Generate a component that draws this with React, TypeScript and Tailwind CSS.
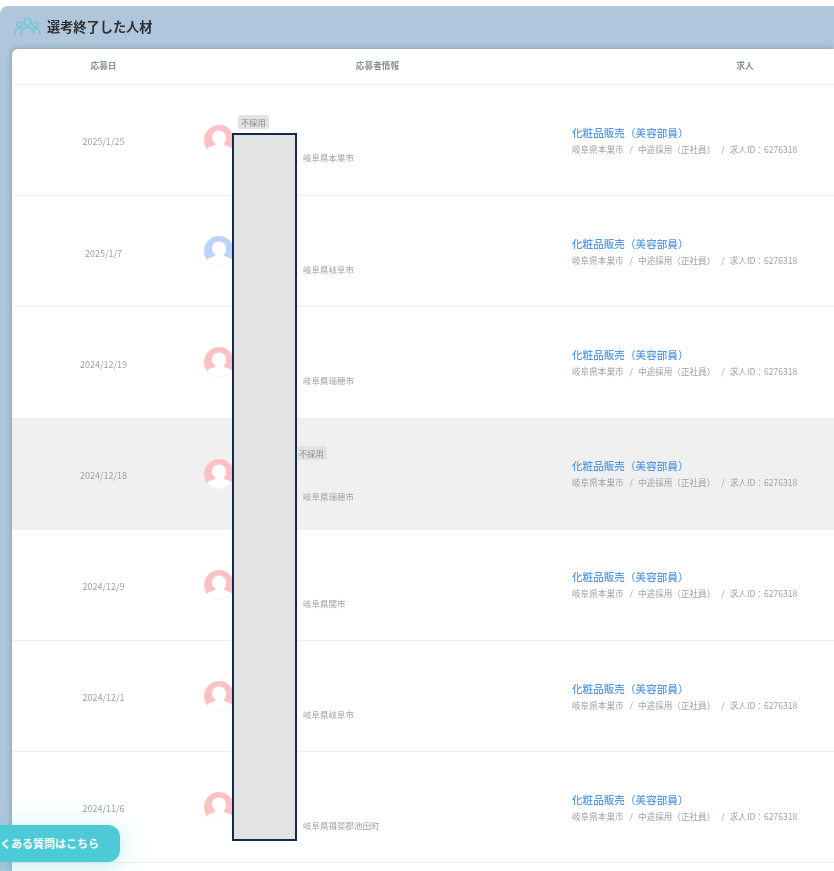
const FONT = "font-['Noto_Sans_CJK_JP','Noto_Sans',sans-serif]";

type RowData = {
  date: string;
  city: string;
  blue?: boolean;
  grey?: boolean;
  badge?: string;
  spacer: string;
  shift?: string;
};

const rows: RowData[] = [
  { date: "2025/1/25", city: "岐阜県本巣市", badge: "ml-0", spacer: "h-[23px]", shift: "mb-[2px]" },
  { date: "2025/1/7", city: "岐阜県岐阜市", blue: true, spacer: "h-[36px]" },
  { date: "2024/12/19", city: "岐阜県瑞穂市", spacer: "h-[36px]" },
  { date: "2024/12/18", city: "岐阜県瑞穂市", grey: true, badge: "ml-[58px]", spacer: "h-[31px]" },
  { date: "2024/12/9", city: "岐阜県関市", spacer: "h-[37px]" },
  { date: "2024/12/1", city: "岐阜県岐阜市", spacer: "h-[36px]" },
  { date: "2024/11/6", city: "岐阜県揖斐郡池田町", spacer: "h-[37px]" },
];

function Avatar({ blue }: { blue?: boolean }) {
  const id = blue ? "avatar-blue" : "avatar-pink";
  return (
    <svg width="30" height="30" viewBox="0 0 30 30" className="shrink-0">
      <circle cx="15" cy="15" r="15" fill={blue ? "#bcd3ff" : "#ffc1c3"} />
      <clipPath id={id}>
        <circle cx="15" cy="15" r="15" />
      </clipPath>
      <g clipPath={`url(#${id})`} fill="#fff">
        <path d="M15 5.500c4.200 0 7 3 7 7.200 0 3-1 5.100-2.600 6.600 1.200 1.300 3.500 1.700 5.600 2.500 2.300.9 3.200 2.200 3.800 8.200H2.200c.6-6 1.500-7.300 3.800-8.200 2.100-.8 4.400-1.200 5.600-2.500C10 17.800 8 15.700 8 12.700c0-4.200 2.800-7.200 7-7.200z" />
      </g>
    </svg>
  );
}

function PeopleIcon() {
  return (
    <svg width="27" height="19" viewBox="0 0 27 19" fill="none" stroke="#4ccbd6" strokeWidth="1" className="shrink-0">
      <circle cx="13.500" cy="5" r="3.600" />
      <circle cx="5.500" cy="7.500" r="2.700" />
      <circle cx="21.500" cy="7.500" r="2.700" />
      <path d="M7 18c.4-5 3-8 6.500-8s6.100 3 6.500 8" />
      <path d="M.8 17.500c.3-3.600 2.200-6.200 4.700-6.200 1 0 1.900.4 2.600 1" />
      <path d="M26.200 17.500c-.3-3.600-2.200-6.200-4.700-6.200-1 0-1.900.4-2.600 1" />
    </svg>
  );
}

function Row({ row }: { row: RowData }) {
  return (
    <div className={`flex h-[111.2px] shrink-0 items-center border-b border-[#efefef] ${row.grey ? "bg-[#f0f0f0]" : "bg-white"}`}>
      <div className="w-[183px] shrink-0 pt-[4px] text-center text-[9px] text-[#9aa3ad]">{row.date}</div>
      <div className="flex w-[365px] shrink-0 items-center gap-[4px] pl-[9px]">
        <Avatar blue={row.blue} />
        <div className={`flex flex-col ${row.shift ?? ""}`}>
          {row.badge && (
            <span className={`${row.badge} w-fit rounded-[3px] bg-[#e2e2e2] px-[3px] py-[1px] text-[8.300px] leading-[12px] text-[#8a8a8a]`}>
              不採用
            </span>
          )}
          <div className={row.spacer} />
          <div className="flex items-center gap-[6px] pl-[54px] text-[8.500px] leading-[11px] text-[#9aa3ad]">
            <svg width="5" height="7" viewBox="0 0 5 7" className="shrink-0">
              <path d="M2.500 0a2.500 2.500 0 0 1 2.500 2.500C5 4.200 2.500 7 2.500 7S0 4.200 0 2.500A2.500 2.500 0 0 1 2.500 0z" fill="#8fa5bd" />
            </svg>
            <span>{row.city}</span>
          </div>
        </div>
      </div>
      <div className="flex-1 whitespace-nowrap pl-[12px]">
        <div className="text-[10.600px] font-medium leading-[14px] text-[#5599ec]">化粧品販売（美容部員）</div>
        <div className="mt-[3px] flex text-[8.600px] leading-[12px] text-[#9aa3ad]">
          <span>岐阜県本巣市</span>
          <span className="ml-[6px] mr-[5px]">/</span>
          <span>中途採用（正社員）</span>
          <span className="ml-[6px] mr-[5px]">/</span>
          <span>求人ID：6276318</span>
        </div>
      </div>
    </div>
  );
}

export default function App() {
  return (
    <div className={`${FONT} relative h-[871px] w-[834px] overflow-hidden bg-white pt-[6px]`}>
      <div className="flex h-[865px] flex-col overflow-hidden rounded-tl-lg bg-[#b0c6dc] blur-[0.5px]">
        <div className="flex h-[43px] shrink-0 items-center gap-[6px] pb-[2px] pl-[14px]">
          <PeopleIcon />
          <h1 className="text-[13.200px] font-bold text-[#2f2f2f]">選考終了した人材</h1>
        </div>
        <div className="ml-[12px] flex flex-1 flex-col overflow-hidden rounded-tl-md bg-white shadow-[0_0_6px_rgba(70,95,130,0.45)]">
          <div className="flex h-[36px] shrink-0 items-center border-b border-[#efefef] pb-[2px] text-[8.700px] font-bold text-[#8a9097]">
            <div className="w-[183px] shrink-0 text-center">応募日</div>
            <div className="w-[365px] shrink-0 text-center">応募者情報</div>
            <div className="w-[370px] shrink-0 text-center">求人</div>
          </div>
          {rows.map((row) => (
            <Row key={row.date} row={row} />
          ))}
        </div>
      </div>

      <div className="absolute left-[232px] top-[133px] h-[708px] w-[65px] border-2 border-[#14294f] bg-[#e3e3e3]" />

      <div className="absolute left-[-32px] top-[825px] flex h-[37px] w-[152px] items-center whitespace-nowrap rounded-r-xl bg-[#4ccbd6] pl-[21px] text-[11px] font-bold text-white shadow-[0_4px_24px_rgba(76,203,214,0.35)]">
        よくある質問はこちら
      </div>
    </div>
  );
}
